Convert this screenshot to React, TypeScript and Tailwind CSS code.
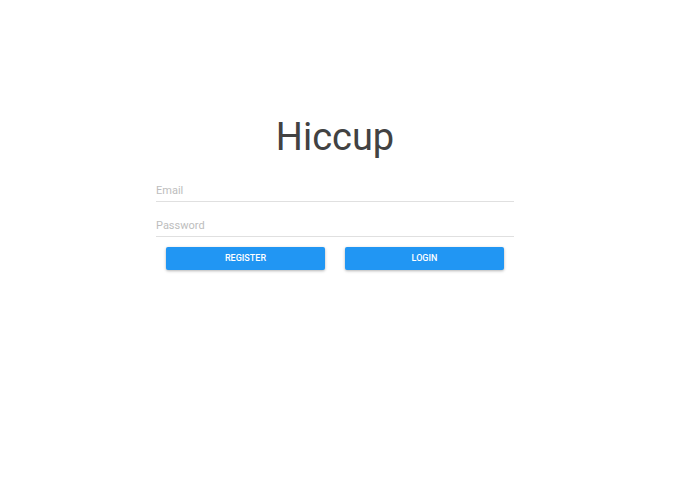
export default function App() {
  return (
    <div className="min-h-[494px] w-full bg-white font-['Roboto',sans-serif]">
      <div className="ml-[156px] w-[358px] pt-[114px]">
        <h1 className="text-center text-[38px] leading-[46px] font-normal text-[#424242]">Hiccup</h1>
        <div className="mt-[14px] flex flex-col">
          <input
            type="text"
            placeholder="Email"
            className="h-[28px] w-full border-b border-[#e0e0e0] bg-transparent pt-[5px] text-[11px] text-[#424242] outline-none placeholder:text-[#bdbdbd]"
          />
          <input
            type="password"
            placeholder="Password"
            className="mt-[7px] h-[28px] w-full border-b border-[#e0e0e0] bg-transparent pt-[5px] text-[11px] text-[#424242] outline-none placeholder:text-[#bdbdbd]"
          />
        </div>
        <div className="mt-[7px] grid grid-cols-2">
          <div className="px-[10px]">
            <button className="h-[23px] w-full rounded-[2px] bg-[#2196f3] text-[9px] font-medium text-white shadow-[0_1px_3px_rgba(0,0,0,0.3)]">
              REGISTER
            </button>
          </div>
          <div className="px-[10px]">
            <button className="h-[23px] w-full rounded-[2px] bg-[#2196f3] text-[9px] font-medium text-white shadow-[0_1px_3px_rgba(0,0,0,0.3)]">
              LOGIN
            </button>
          </div>
        </div>
      </div>
    </div>
  );
}
